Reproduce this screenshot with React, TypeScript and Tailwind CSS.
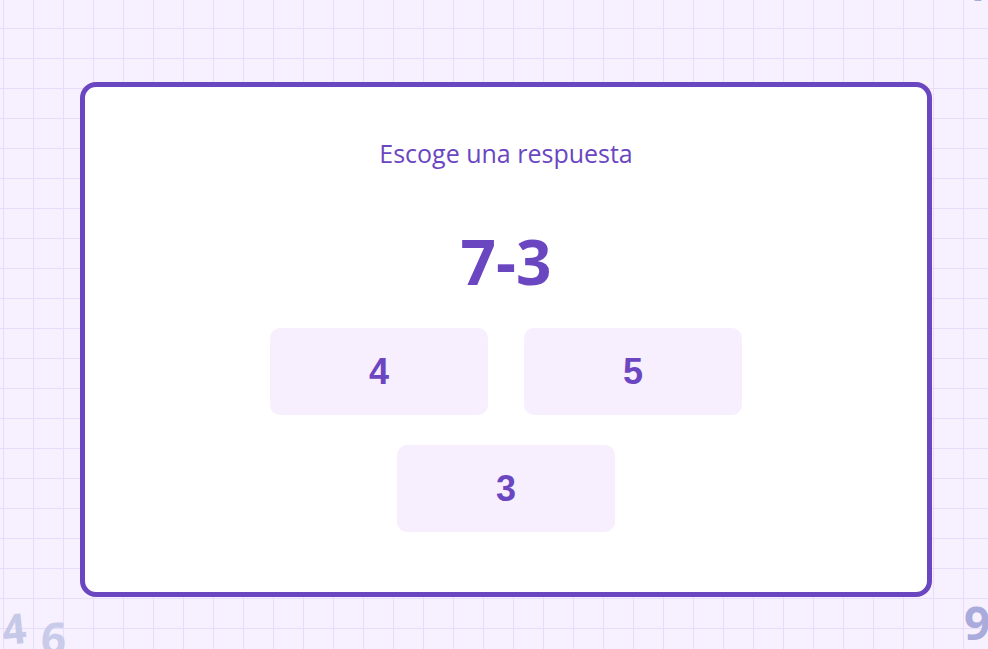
import React from "react"

const options = ["4", "5"]

export default function App() {
  return (
    <div className="relative h-[649px] w-full overflow-hidden bg-[#f7f0fe] bg-[linear-gradient(to_right,#e7ddfb_1px,transparent_1px),linear-gradient(to_bottom,#e7ddfb_1px,transparent_1px)] bg-[size:30px_30px] bg-[position:3px_28px] font-['Open_Sans',sans-serif]">
      {/* floating digits */}
      <span className="absolute left-[2px] top-[596px] -rotate-6 text-[42px] font-bold text-[#c6c8e8] font-['Open_Sans',sans-serif]">4</span>
      <span className="absolute left-[41px] top-[604px] rotate-3 text-[44px] font-bold text-[#c9cbea] font-['Open_Sans',sans-serif]">6</span>
      <span className="absolute left-[964px] top-[588px] text-[46px] font-bold text-[#a8abdb] font-['Open_Sans',sans-serif]">9</span>
      <span className="absolute left-[963px] top-[-49px] text-[44px] font-bold text-[#a8abdb] font-['Open_Sans',sans-serif]">1</span>

      <div className="pl-[80px] pt-[82px]">
        <div className="flex w-[852px] h-[515px] flex-col items-center rounded-[16px] border-[5px] border-[#6b46c1] bg-white">
          <h2 className="mt-[48px] text-[25px] leading-[36px] text-[#6b46c1]">Escoge una respuesta</h2>
          <div className="mt-[52px] text-[62px] font-bold leading-[76px] text-[#6b46c1]">7-3</div>

          <div className="mt-[29px] flex gap-[36px]">
            {options.map((o) => (
              <button
                key={o}
                className="flex h-[87px] w-[218px] items-center justify-center rounded-[10px] bg-[#f7eefe] text-[36px] font-bold text-[#6b46c1] font-['Liberation_Sans',Arial,sans-serif]"
              >
                {o}
              </button>
            ))}
          </div>
          <button className="mt-[30px] flex h-[87px] w-[218px] items-center justify-center rounded-[10px] bg-[#f7eefe] text-[36px] font-bold text-[#6b46c1] font-['Liberation_Sans',Arial,sans-serif]">
            3
          </button>
        </div>
      </div>
    </div>
  )
}
